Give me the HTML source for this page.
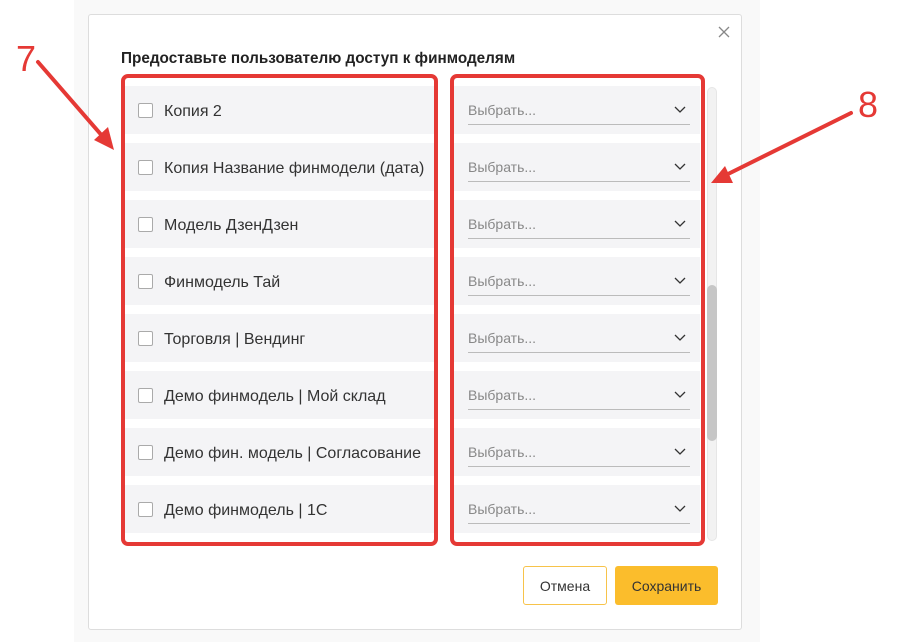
<!DOCTYPE html>
<html><head><meta charset="utf-8"><style>
body{margin:0;width:914px;height:642px;background:#fff;position:relative;overflow:hidden;font-family:"Liberation Sans","DejaVu Sans",sans-serif}
.bg{position:absolute;left:74px;top:0;width:686px;height:642px;background:#f9f9f9}
.modal{position:absolute;left:88px;top:14px;width:654px;height:616px;background:#fff;border:1px solid #ddd;border-radius:3px;box-sizing:border-box}
.title{position:absolute;left:121px;top:50px;font-size:15.3px;font-weight:bold;color:#222}
.rowl{position:absolute;left:124px;width:310px;height:48px;background:#f4f4f6}
.rowr{position:absolute;left:454px;width:246px;height:48px;background:#f4f4f6}
.cb{position:absolute;left:14px;top:17px;width:13px;height:13px;border:1.5px solid #aaa;border-radius:2px;background:#fff}
.lt{position:absolute;left:40px;top:17px;font-size:16px;color:#333;white-space:nowrap}
.sel{position:absolute;left:14px;right:10px;top:14px;height:25px;border-bottom:1px solid #bbb;font-size:14px;color:#888;line-height:20px;padding-top:0px;box-sizing:border-box}
.sel svg{position:absolute;right:4px;top:6px}
.red{position:absolute;border:4px solid #e53935;border-radius:7px;box-sizing:border-box}
.btn{position:absolute;top:566px;height:39px;border-radius:3px;font-size:14px;color:#333;display:flex;align-items:center;justify-content:center;box-sizing:border-box}
.num{position:absolute;color:#e53935;font-size:36px;font-family:"Liberation Sans",sans-serif}
</style></head><body>
<div class="bg"></div>
<div class="modal"></div>
<svg style="position:absolute;left:718px;top:26px" width="12" height="12"><path d="M1 1L11 11M11 1L1 11" stroke="#888" stroke-width="1.3"/></svg>
<div class="title">Предоставьте пользователю доступ к финмоделям</div>

<div class="rowl" style="top:86px"><div class="cb"></div><div class="lt">Копия 2</div></div>
<div class="rowl" style="top:143px"><div class="cb"></div><div class="lt">Копия Название финмодели (дата)</div></div>
<div class="rowl" style="top:200px"><div class="cb"></div><div class="lt">Модель ДзенДзен</div></div>
<div class="rowl" style="top:257px"><div class="cb"></div><div class="lt">Финмодель Тай</div></div>
<div class="rowl" style="top:314px"><div class="cb"></div><div class="lt">Торговля | Вендинг</div></div>
<div class="rowl" style="top:371px"><div class="cb"></div><div class="lt">Демо финмодель | Мой склад</div></div>
<div class="rowl" style="top:428px"><div class="cb"></div><div class="lt">Демо фин. модель | Согласование</div></div>
<div class="rowl" style="top:485px"><div class="cb"></div><div class="lt">Демо финмодель | 1С</div></div>

<div class="rowr" style="top:86px"><div class="sel">Выбрать...<svg width="12" height="8"><path d="M1 1L6 6L11 1" fill="none" stroke="#333" stroke-width="1.3"/></svg></div></div>
<div class="rowr" style="top:143px"><div class="sel">Выбрать...<svg width="12" height="8"><path d="M1 1L6 6L11 1" fill="none" stroke="#333" stroke-width="1.3"/></svg></div></div>
<div class="rowr" style="top:200px"><div class="sel">Выбрать...<svg width="12" height="8"><path d="M1 1L6 6L11 1" fill="none" stroke="#333" stroke-width="1.3"/></svg></div></div>
<div class="rowr" style="top:257px"><div class="sel">Выбрать...<svg width="12" height="8"><path d="M1 1L6 6L11 1" fill="none" stroke="#333" stroke-width="1.3"/></svg></div></div>
<div class="rowr" style="top:314px"><div class="sel">Выбрать...<svg width="12" height="8"><path d="M1 1L6 6L11 1" fill="none" stroke="#333" stroke-width="1.3"/></svg></div></div>
<div class="rowr" style="top:371px"><div class="sel">Выбрать...<svg width="12" height="8"><path d="M1 1L6 6L11 1" fill="none" stroke="#333" stroke-width="1.3"/></svg></div></div>
<div class="rowr" style="top:428px"><div class="sel">Выбрать...<svg width="12" height="8"><path d="M1 1L6 6L11 1" fill="none" stroke="#333" stroke-width="1.3"/></svg></div></div>
<div class="rowr" style="top:485px"><div class="sel">Выбрать...<svg width="12" height="8"><path d="M1 1L6 6L11 1" fill="none" stroke="#333" stroke-width="1.3"/></svg></div></div>

<div style="position:absolute;left:707px;top:87px;width:10px;height:454px;background:#f2f2f2;border-radius:5px;border:1px solid #e6e6e6;box-sizing:border-box"></div>
<div style="position:absolute;left:707px;top:285px;width:10px;height:156px;background:#c6c6c6;border-radius:5px"></div>

<div class="red" style="left:121px;top:74px;width:317px;height:472px"></div>
<div class="red" style="left:450px;top:74px;width:255px;height:472px"></div>

<div class="btn" style="left:523px;width:84px;border:1px solid #f7c34a;background:#fff">Отмена</div>
<div class="btn" style="left:615px;width:103px;background:#fbbd2c">Сохранить</div>

<div class="num" style="left:16px;top:38px">7</div>
<div class="num" style="left:858px;top:84px">8</div>
<svg style="position:absolute;left:0;top:0" width="914" height="642">
<path d="M38 62L104 138" stroke="#e53935" stroke-width="4" stroke-linecap="round"/>
<path d="M114 150L94 140L108 127Z" fill="#e53935"/>
<path d="M851 113L724 176" stroke="#e53935" stroke-width="4" stroke-linecap="round"/>
<path d="M711 183L725 166L733 183Z" fill="#e53935"/>
</svg>
</body></html>
